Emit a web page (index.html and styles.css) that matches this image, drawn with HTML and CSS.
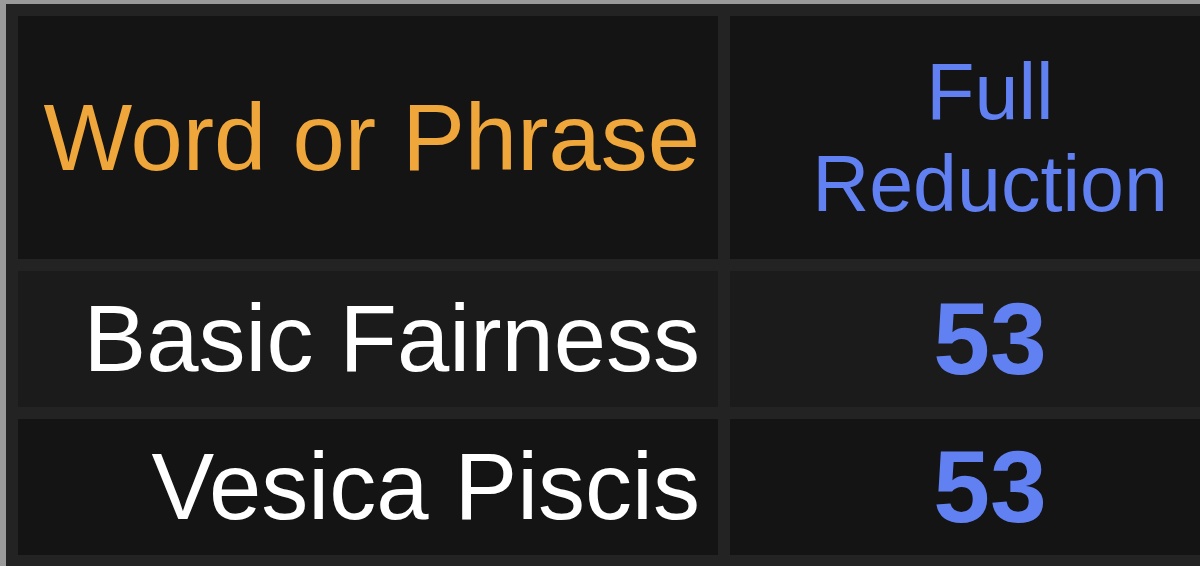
FILE: index.html
```html
<!DOCTYPE html>
<html>
<head>
<meta charset="utf-8">
<link rel="stylesheet" href="styles.css">
</head>
<body>
<div class="frame">
  <div class="grid">
    <div class="cell head word"><span>Word or Phrase</span></div>
    <div class="cell head num"><span>Full<br>Reduction</span></div>
    <div class="cell alt word"><span>Basic Fairness</span></div>
    <div class="cell alt value"><span>53</span></div>
    <div class="cell word"><span>Vesica Piscis</span></div>
    <div class="cell value"><span>53</span></div>
  </div>
</div>
</body>
</html>
```
FILE: styles.css
```css
html, body {
  margin: 0;
  padding: 0;
  background: #9a9a9a;
  overflow: hidden;
  width: 1200px;
  height: 566px;
}
.frame {
  padding: 4px 0 0 6px;
}
.grid {
  display: grid;
  grid-template-columns: 700px 470px;
  grid-template-rows: 243px 136px 136px;
  gap: 12px;
  padding: 12px 0 12px 12px;
  background: #232323;
  font-family: "Liberation Sans", Arial, sans-serif;
}
.cell {
  background: #141414;
  display: flex;
  align-items: center;
}
.cell.alt {
  background: #1b1b1b;
}
.word {
  justify-content: flex-end;
  padding-right: 18px;
  font-size: 94px;
  color: #ffffff;
}
.head.word {
  color: #efa63a;
}
.num {
  justify-content: center;
  padding-left: 50px;
  text-align: center;
  font-size: 79px;
  line-height: 92px;
  color: #6180f1;
}
.value {
  justify-content: center;
  padding-left: 50px;
  font-size: 102px;
  font-weight: bold;
  color: #6180f1;
}
```
